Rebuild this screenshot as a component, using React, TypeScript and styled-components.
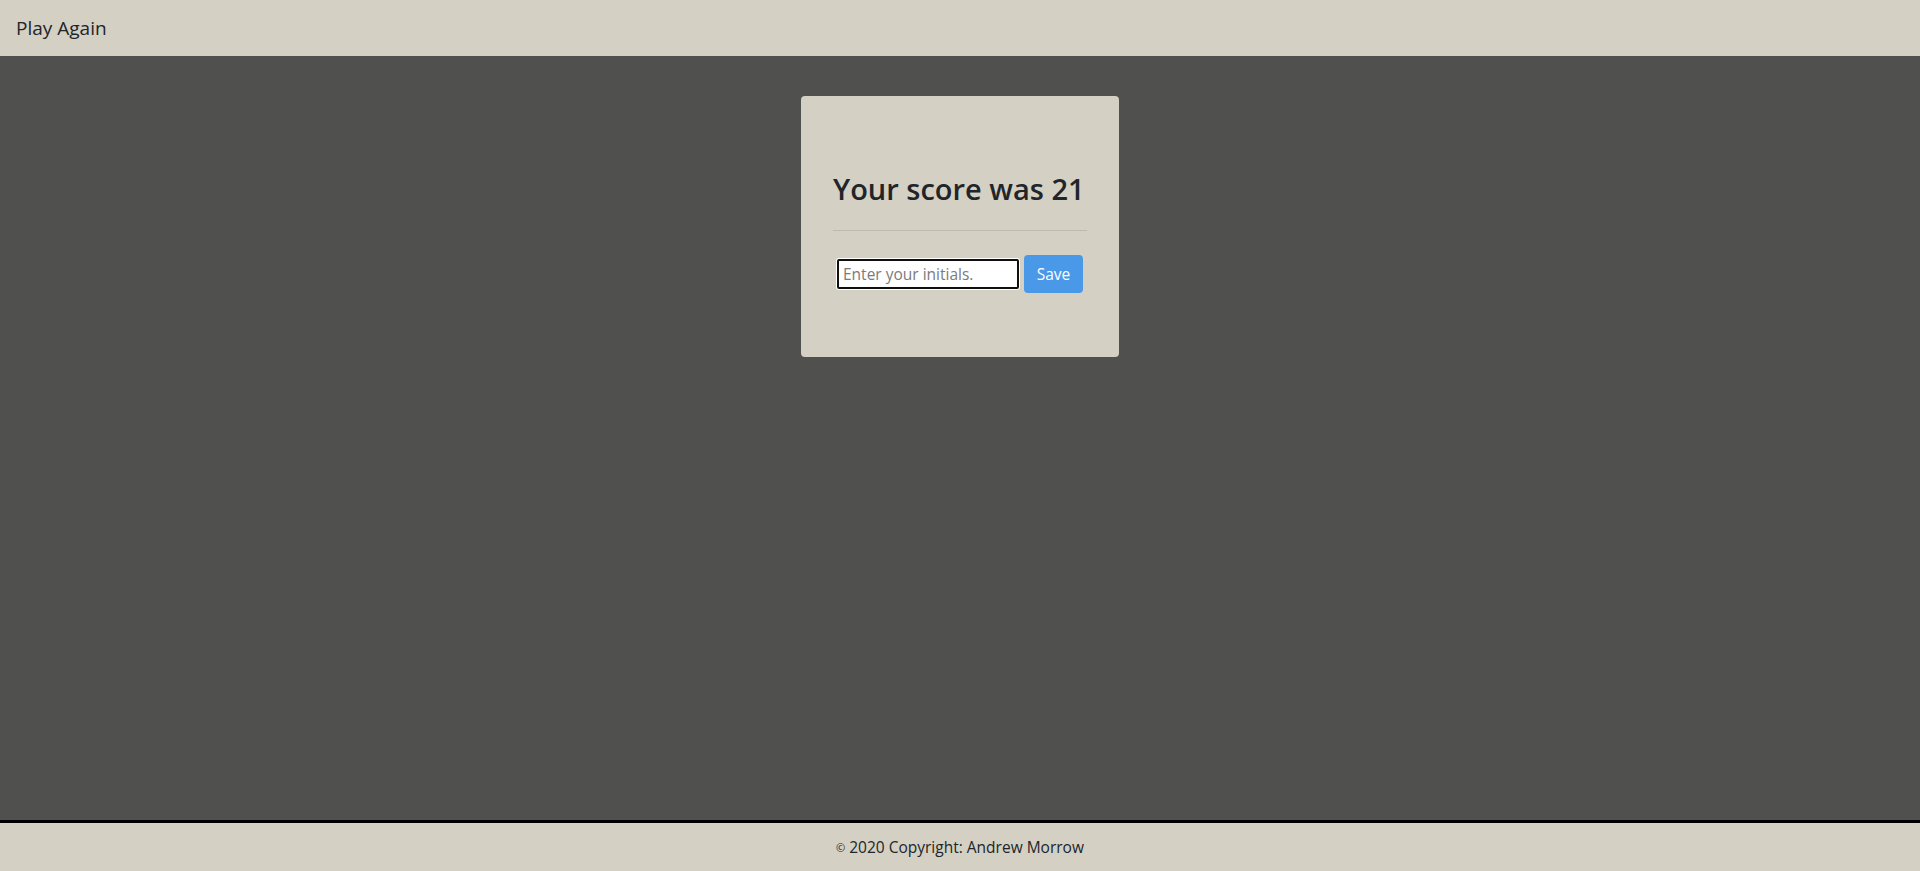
import React, { useState } from 'react';
import styled, { createGlobalStyle } from 'styled-components';

const GlobalStyle = createGlobalStyle`
  * {
    box-sizing: border-box;
  }

  body {
    margin: 0;
    font-family: "Open Sans", "Noto Sans", sans-serif;
    color: #212529;
    background-color: #50504e;
  }
`;

const Page = styled.div`
  display: flex;
  flex-direction: column;
  min-height: 100vh;
`;

const NavBar = styled.nav`
  display: flex;
  align-items: center;
  height: 56px;
  padding: 0 16px;
  background-color: #d4d0c4;
`;

const Brand = styled.a`
  font-size: 19px;
  color: #212529;
  text-decoration: none;
  cursor: pointer;
`;

const Main = styled.main`
  flex: 1;
  display: flex;
  justify-content: center;
  align-items: flex-start;
  padding-top: 40px;
`;

const Card = styled.section`
  width: 318px;
  padding: 75px 32px 64px;
  background-color: #d4d0c4;
  border-radius: 4px;
`;

const Heading = styled.h2`
  margin: 0;
  font-size: 29px;
  font-weight: 600;
  line-height: 35px;
  white-space: nowrap;
`;

const Divider = styled.hr`
  margin: 24px 0;
  border: 0;
  border-top: 1px solid rgba(0, 0, 0, 0.1);
`;

const Form = styled.form`
  display: flex;
  justify-content: center;
  align-items: center;
  gap: 5px;
`;

const Initials = styled.input`
  width: 182px;
  height: 30px;
  padding: 0 4px;
  font-family: inherit;
  font-size: 15.5px;
  color: #212529;
  background-color: #ffffff;
  border: 2px solid #101010;
  border-radius: 2px;
  box-shadow: 0 0 0 1px #ffffff;
  outline: none;

  &::placeholder {
    color: #7b7b7b;
  }
`;

const SaveButton = styled.button`
  width: 59px;
  height: 38px;
  font-family: inherit;
  font-size: 15.5px;
  color: #ffffff;
  background-color: #4a99e9;
  border: none;
  border-radius: 4px;
  cursor: pointer;
`;

const Footer = styled.footer`
  display: flex;
  justify-content: center;
  align-items: center;
  height: 51px;
  background-color: #d4d0c4;
  border-top: 3px solid #000000;
  font-size: 15.5px;
`;

const Copy = styled.span`
  font-size: 11px;
  margin-right: 4px;
`;

export default function App() {
  const [initials, setInitials] = useState('');
  const score = 21;

  return (
    <Page>
      <GlobalStyle />
      <NavBar>
        <Brand>Play Again</Brand>
      </NavBar>
      <Main>
        <Card>
          <Heading>Your score was {score}</Heading>
          <Divider />
          <Form onSubmit={(e) => e.preventDefault()}>
            <Initials
              placeholder="Enter your initials."
              value={initials}
              onChange={(e) => setInitials(e.target.value)}
            />
            <SaveButton type="submit">Save</SaveButton>
          </Form>
        </Card>
      </Main>
      <Footer>
        <Copy>©</Copy> 2020 Copyright: Andrew Morrow
      </Footer>
    </Page>
  );
}
